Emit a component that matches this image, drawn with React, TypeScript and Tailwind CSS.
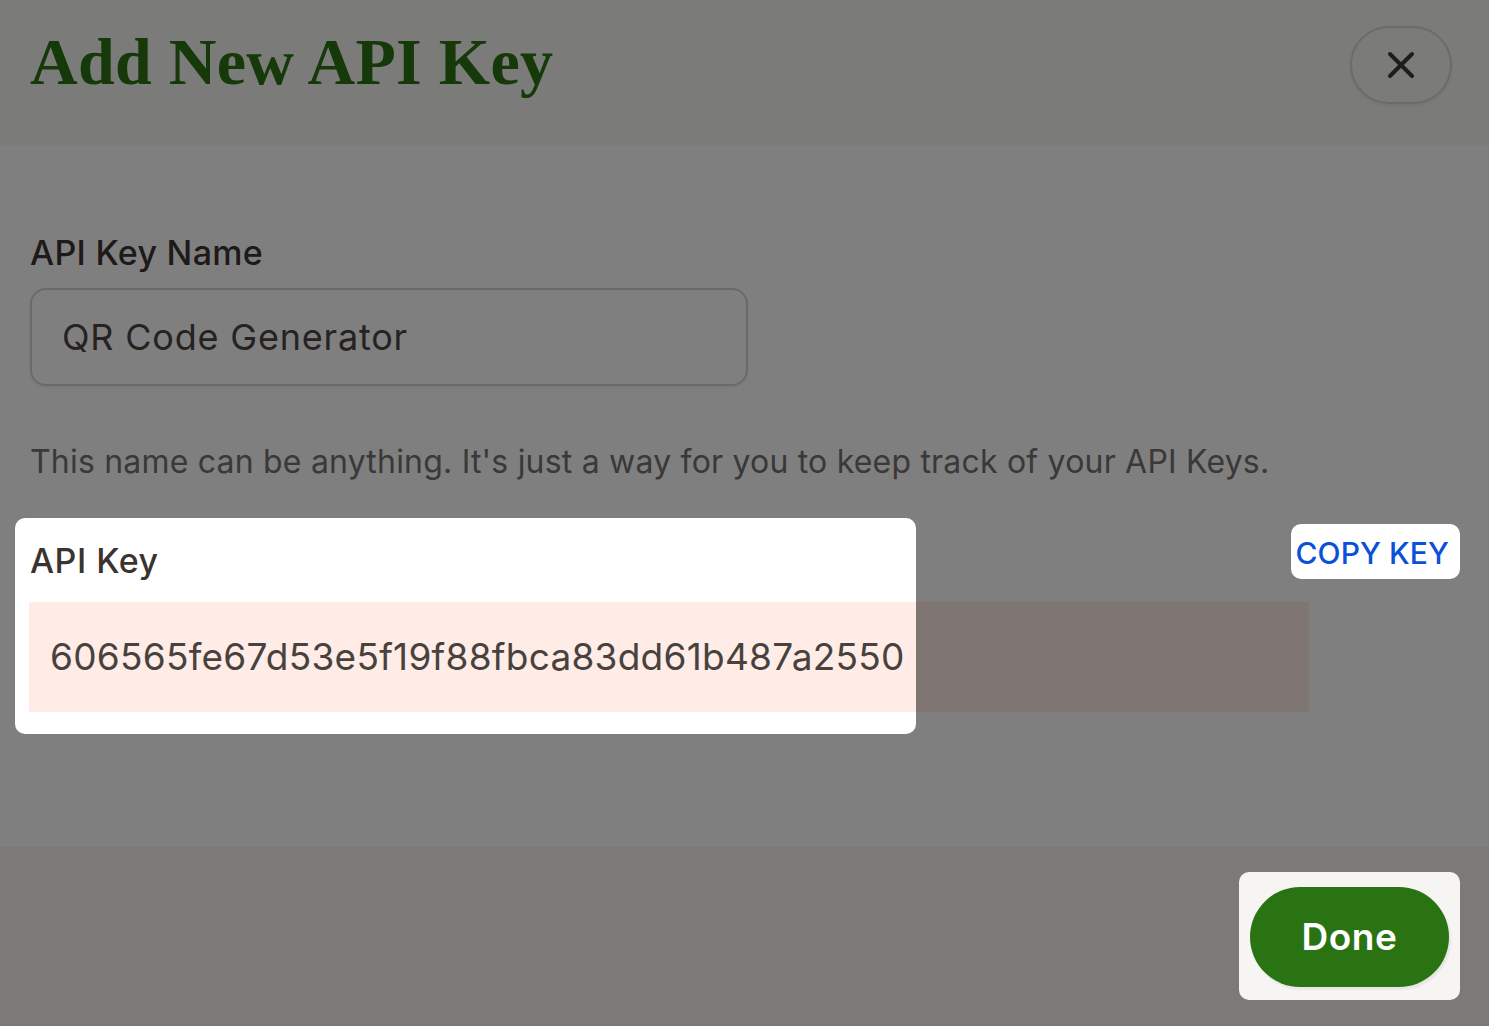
import { useState } from "react";

const API_KEY = "606565fe67d53e5f19f88fbca83dd61b487a2550";

// tour spotlight holes, in page pixels
const HOLES = [
  { x: 15, y: 518, w: 901, h: 216, r: 10 },
  { x: 1291, y: 524, w: 169, h: 55, r: 10 },
  { x: 1239, y: 872, w: 221, h: 128, r: 10 },
];

function roundedRect(x: number, y: number, w: number, h: number, r: number) {
  return `M${x + r},${y} H${x + w - r} A${r},${r} 0 0 1 ${x + w},${y + r} V${y + h - r} A${r},${r} 0 0 1 ${x + w - r},${y + h} H${x + r} A${r},${r} 0 0 1 ${x},${y + h - r} V${y + r} A${r},${r} 0 0 1 ${x + r},${y} Z`;
}

function TourOverlay() {
  const d =
    "M0,0 H1489 V1026 H0 Z " +
    HOLES.map((h) => roundedRect(h.x, h.y, h.w, h.h, h.r)).join(" ");
  return (
    <svg
      className="fixed inset-0 z-50 pointer-events-none"
      width="1489"
      height="1026"
      viewBox="0 0 1489 1026"
    >
      <path d={d} fillRule="evenodd" fill="rgba(0,0,0,0.5)" />
    </svg>
  );
}

export default function App() {
  const [name, setName] = useState("QR Code Generator");

  return (
    <div className="relative h-screen flex flex-col bg-white font-['Inter',sans-serif] overflow-hidden">
      <header className="h-[146px] shrink-0 bg-[#f6f6f4] flex items-start justify-between pl-[30px] pr-[37px] pt-[26px]">
        <h1 className="mt-[3px] font-['Liberation_Serif',serif] font-bold text-[66px] leading-none text-[#2a7313] tracking-[0.3px]">
          Add New API Key
        </h1>
        <button
          type="button"
          className="w-[102px] h-[78px] rounded-full border-2 border-[#d6d6d6] shadow-[0_2px_3px_rgba(0,0,0,0.06)] flex items-center justify-center"
        >
          <svg width="28" height="28" viewBox="0 0 28 28" fill="none">
            <path
              d="M3 3 L25 25 M25 3 L3 25"
              stroke="#3e3b39"
              strokeWidth="4"
              strokeLinecap="round"
            />
          </svg>
        </button>
      </header>

      <main className="flex-1 pl-[30px] pr-[41px] pt-[87px]">
        <label className="block text-[34px] leading-[40px] text-[#3a3432] font-medium tracking-[0.3px]">
          API Key Name
        </label>
        <input
          value={name}
          onChange={(e) => setName(e.target.value)}
          className="mt-[15px] w-[718px] h-[98px] rounded-[16px] border-2 border-[#d4d4d4] px-[30px] text-[36px] tracking-[0.8px] text-[#4a4542] outline-none shadow-[0_2px_3px_rgba(0,0,0,0.05)]"
        />
        <p className="mt-[56px] text-[32px] leading-[40px] tracking-[0.2px] text-[#767171]">
          This name can be anything. It's just a way for you to keep track of your API Keys.
        </p>

        <div className="mt-[59px] flex items-start justify-between">
          <label className="text-[34px] leading-[40px] text-[#3a3330] font-medium tracking-[0.5px]">
            API Key
          </label>
          <button
            type="button"
            className="-mt-[8px] -mr-[1px] text-[30px] leading-[40px] text-[#0b50d8] font-medium tracking-[0.1px]"
          >
            COPY KEY
          </button>
        </div>
        <div className="mt-[21px] -ml-px w-[1280px] h-[110px] bg-[#ffece6] flex items-center pl-[21px]">
          <span className="text-[37px] text-[#48423f] tracking-[0.25px]">{API_KEY}</span>
        </div>
      </main>

      <footer className="h-[179px] shrink-0 bg-[#f6f5f3] flex justify-end items-start pt-[40px] pr-[40px]">
        <button
          type="button"
          className="w-[199px] h-[100px] rounded-full bg-[#2a7313] text-white text-[37px] font-semibold tracking-[0.5px] shadow-[2px_3px_2px_rgba(0,0,0,0.06)]"
        >
          Done
        </button>
      </footer>

      <TourOverlay />
    </div>
  );
}
